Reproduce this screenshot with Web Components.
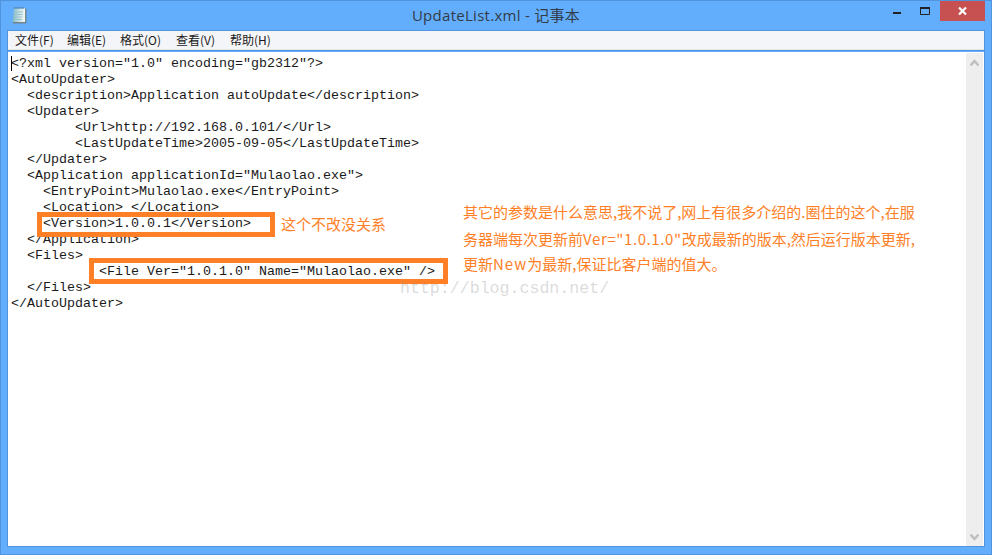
<!DOCTYPE html>
<html><head><meta charset="utf-8">
<style>
html,body{margin:0;padding:0;background:#62aefc;}
.ls1{letter-spacing:.6px}
.ls2{letter-spacing:1px}
</style></head><body>
<np-window>
  <np-title slot="title">UpdateList.xml - 记事本</np-title>
  <np-menu slot="menu"><span style="width:52px">文件(F)</span><span style="width:53px">编辑(E)</span><span style="width:56px">格式(O)</span><span style="width:54px">查看(V)</span><span>帮助(H)</span></np-menu>
  <np-editor slot="editor">
    <np-box style="left:37px;top:211px;width:238px;height:25px"></np-box>
    <np-box style="left:89px;top:257px;width:359px;height:26px"></np-box>
    <np-note style="left:281px;top:212px;">这个不改没关系</np-note>
    <np-note style="left:463px;top:200px;">其它的参数是什么意思,我不说了,网上有很多介绍的.圈住的这个,在服</np-note>
    <np-note style="left:463px;top:227px;">务器端每次更新前<span class="ls1">Ver="1.0.1.0"</span>改成最新的版本,然后运行版本更新,</np-note>
    <np-note style="left:463px;top:252px;">更新<span class="ls2">New</span>为最新,保证比客户端的值大。</np-note>
    <np-mark style="left:400px;top:277px;">http://blog.csdn.net/</np-mark>
  </np-editor>
</np-window>
<script>
function def(name,html){customElements.define(name,class extends HTMLElement{constructor(){super();this.attachShadow({mode:'open'}).innerHTML=html;}});}
def('np-window',`<style>
:host{display:flex;flex-direction:column;width:992px;height:555px;box-sizing:border-box;background:#62aefc;border:1px solid #4f94dc;position:relative;}
.client{flex:1;display:flex;flex-direction:column;margin:0 6px 7px 6px;border:1px solid #4f94dc;min-height:0;}
</style><slot name="title"></slot><div class="client"><slot name="menu"></slot><slot name="editor"></slot></div>`);
def('np-title',`<style>
:host{display:flex;align-items:flex-start;height:29px;flex:none;position:relative;}
.ic{position:absolute;left:10px;top:6px}
.t{position:absolute;left:0;right:0;top:4px;text-align:center;font:15px/20px "Open Sans","Noto Sans CJK SC",sans-serif;letter-spacing:.28px;color:#333b47;}
.btns{position:absolute;right:6px;top:0;display:flex;align-items:flex-start}
.b{width:29px;height:20px;display:flex;align-items:center;justify-content:center}
.c{width:45px;height:20px;background:#c75050;display:flex;align-items:center;justify-content:center}
</style>
<svg class="ic" width="16" height="17" viewBox="0 0 16 17"><defs><linearGradient id="g" x1="0" x2="1" y1="0" y2="0"><stop offset="0" stop-color="#7fb9c4"/><stop offset=".6" stop-color="#cfe6ea"/><stop offset="1" stop-color="#f2fafa"/></linearGradient></defs>
<path d="M3 1.500h11.500v14H1.500z" fill="url(#g)"/><path d="M14.800 1.500v14.300H2" fill="none" stroke="#6f6a55"/><path d="M3.500 1h10" stroke="#3c4a50" stroke-dasharray="1 1"/><path d="M4 5h8M3.700 7.500h8M3.300 10h8M3 12.500h8" stroke="#9cc3cc"/></svg>
<div class="t"><slot></slot></div>
<div class="btns">
<div class="b"><svg width="10" height="10" viewBox="0 0 10 10"><path d="M1 6h8v2H1z" fill="#222"/></svg></div>
<div class="b"><svg width="11" height="10" viewBox="0 0 11 10"><path d="M.5 1.500h9v7h-9z" fill="none" stroke="#222"/><path d="M0 1h10v2H0z" fill="#222"/></svg></div>
<div class="c"><svg width="11" height="10" viewBox="0 0 11 10"><path d="M2 1.500l7 7M9 1.500l-7 7" stroke="#fff" stroke-width="2.200"/></svg></div>
</div>`);
def('np-menu',`<style>
:host{display:flex;height:18px;flex:none;background:#f4f5f8;border-bottom:1px solid #e6e6e6;padding-left:7px;font:12px/18px "Noto Sans CJK SC","Liberation Sans",sans-serif;color:#1a1a1a;box-shadow:0 1px 0 #4f94dc;margin-bottom:1px}
::slotted(span){display:block;white-space:nowrap}
</style><slot></slot>`);
def('np-editor',`<style>
:host{display:block;flex:1;background:#fff;position:relative;min-height:0;margin-top:1px}
pre{margin:0;position:absolute;left:3px;top:4px;font:13.333px/16px "Liberation Mono",monospace;color:#1a1a1a;tab-size:8}
.caret{position:absolute;left:3px;top:4px;width:1px;height:15px;background:#000}
.sb{position:absolute;right:1px;top:0;bottom:0;width:17px;background:#eeeeee;margin:1px 0 0}
.sb svg{position:absolute;left:4px}
.over{position:absolute;left:-8px;top:-51px}
</style>
<pre>&lt;?xml version="1.0" encoding="gb2312"?&gt;
&lt;AutoUpdater&gt;
  &lt;description&gt;Application autoUpdate&lt;/description&gt;
  &lt;Updater&gt;
        &lt;Url&gt;http://192.168.0.101/&lt;/Url&gt;
        &lt;LastUpdateTime&gt;2005-09-05&lt;/LastUpdateTime&gt;
  &lt;/Updater&gt;
  &lt;Application applicationId="Mulaolao.exe"&gt;
    &lt;EntryPoint&gt;Mulaolao.exe&lt;/EntryPoint&gt;
    &lt;Location&gt; &lt;/Location&gt;
    &lt;Version&gt;1.0.0.1&lt;/Version&gt;
  &lt;/Application&gt;
  &lt;Files&gt;
           &lt;File Ver="1.0.1.0" Name="Mulaolao.exe" /&gt;
  &lt;/Files&gt;
&lt;/AutoUpdater&gt;</pre>
<div class="caret"></div>
<div class="sb">
<svg style="top:6px" width="9" height="8" viewBox="0 0 9 8"><path d="M.5 6.500L4.500 2l4 4.500" fill="none" stroke="#bdbdbd" stroke-width="2.400"/></svg>
<svg style="bottom:5px" width="9" height="8" viewBox="0 0 9 8"><path d="M.5 1.500L4.500 6l4-4.500" fill="none" stroke="#bdbdbd" stroke-width="2.400"/></svg>
</div>
<div class="over"><slot></slot></div>`);
def('np-box',`<style>:host{display:block;position:absolute;box-sizing:border-box;border:5px solid #ff7f27;}</style>`);
def('np-note',`<style>:host{display:block;position:absolute;white-space:nowrap;font:15px/22px "Noto Sans CJK SC","Liberation Sans",sans-serif;color:#ff7f27;}</style><slot></slot>`);
def('np-mark',`<style>:host{display:block;position:absolute;white-space:nowrap;font:16.600px/22px "Liberation Mono",monospace;color:rgba(150,150,150,.35);}</style><slot></slot>`);
</script>
</body></html>
